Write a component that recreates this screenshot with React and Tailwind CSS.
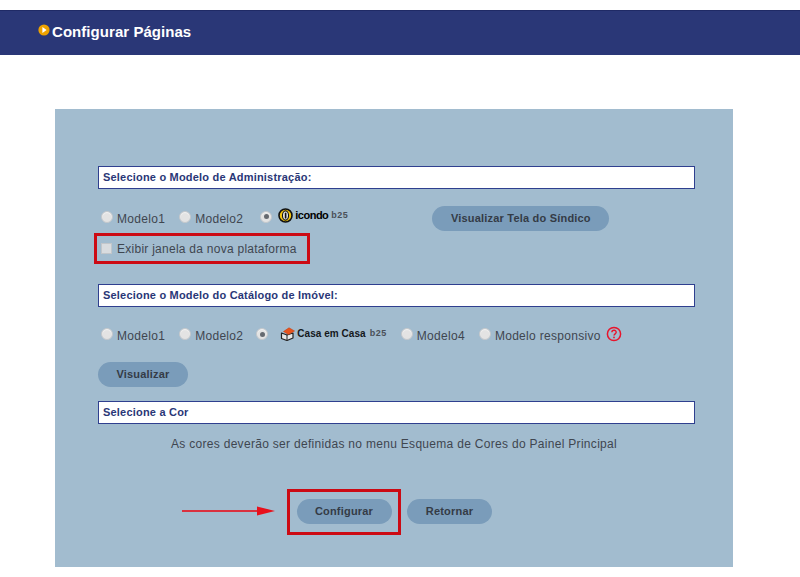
import React from 'react';

const FONT = 'font-["Liberation_Sans",Arial,sans-serif]';

function SectionBar({ title, className = '' }) {
  return (
    <div className={`flex h-[23px] w-[597px] items-center border border-[#2f3f8f] bg-white pb-[1px] pl-1 text-[11px] font-bold tracking-[0.2px] text-[#2a3777] ${className}`}>
      {title}
    </div>
  );
}

function Radio({ checked }) {
  return (
    <span className="mb-[4px] flex h-[12px] w-[12px] shrink-0 items-center justify-center rounded-full border border-[#c4c8cc] bg-[#e3e3e3] shadow-[inset_0_1px_1px_#f5f5f5]">
      {checked && <span className="h-[5px] w-[5px] rounded-full bg-[#666a70]" />}
    </span>
  );
}

function Option({ label, checked, className = '' }) {
  return (
    <label className={`flex items-center ${className}`}>
      <Radio checked={checked} />
      {label && <span className="ml-[4px] text-[12px] tracking-[0.3px] text-[#3f4650]">{label}</span>}
    </label>
  );
}

function PillButton({ children, className = '' }) {
  return (
    <button className={`flex h-[25px] items-center justify-center rounded-full bg-[#7a9cba] text-[11px] font-bold tracking-[0.2px] text-[#343b46] ${className}`}>
      {children}
    </button>
  );
}

function IcondoLogo() {
  return (
    <span className="flex items-center">
      <svg width="15" height="15" viewBox="0 0 15 15">
        <circle cx="7.5" cy="7.5" r="6.5" fill="#f2c40f" stroke="#111" strokeWidth="1.6" />
        <ellipse cx="7.5" cy="7.5" rx="3" ry="4.6" fill="#fff" stroke="#111" strokeWidth="1.2" />
        <rect x="6.7" y="4.6" width="1.8" height="6" fill="#111" />
      </svg>
      <span className="ml-[2px] text-[11px] font-bold tracking-[-0.5px] text-black">icondo</span>
      <span className="ml-[3px] text-[9px] font-bold tracking-[0.5px] text-[#4a5058]">b25</span>
    </span>
  );
}

function CasaLogo() {
  return (
    <span className="flex items-center">
      <svg width="15" height="14" viewBox="0 0 15 14">
        <path d="M1.5 6 L1.5 11.5 L7 13.5 L13 11 L13 6 L7 8 Z" fill="#e8e8e8" stroke="#222" strokeWidth="1.2" strokeLinejoin="round" />
        <path d="M3.5 4.5 L9 0.8 L14.5 4 L8.5 7.5 Z" fill="#e8541e" stroke="#c8400f" strokeWidth="0.6" />
        <path d="M7 8 L7 13" stroke="#222" strokeWidth="1" />
      </svg>
      <span className="ml-[2px] text-[10px] font-bold tracking-[0.05px] text-[#15181c]">Casa em Casa</span>
      <span className="ml-[4px] text-[9px] font-bold tracking-[0.5px] text-[#4a5058]">b25</span>
    </span>
  );
}

export default function App() {
  return (
    <div className={`min-h-[577px] overflow-hidden bg-white ${FONT}`}>
      {/* Title bar */}
      <div className="mt-[10px] flex h-[45px] items-center border-t border-[#1f2a66] bg-[#2a3777] pb-[2px] pl-[38px]">
        <svg width="12" height="12" viewBox="0 0 12 12" className="mb-[4px]">
          <circle cx="6" cy="6" r="5.6" fill="#eea200" />
          <path d="M4.4 3 L8.6 6 L4.4 9 Z" fill="#fff" />
        </svg>
        <h1 className="ml-[2px] text-[15px] font-bold tracking-[0.05px] text-white">Configurar Páginas</h1>
      </div>

      {/* Panel */}
      <div className="ml-[55px] mt-[54px] h-[458px] w-[678px] bg-[#a2bccf] pl-[43px] pt-[57px]">
        <SectionBar title="Selecione o Modelo de Administração:" />

        <div className="mt-[17px] flex h-[25px] items-center">
          <Option label="Modelo1" className="ml-[3px]" />
          <Option label="Modelo2" className="ml-[14px]" />
          <Option className="ml-[17px]" checked />
          <span className="mb-[6px] ml-[6px]"><IcondoLogo /></span>
          <PillButton className="ml-[84px] w-[177px]">Visualizar Tela do Síndico</PillButton>
        </div>

        <div className="-ml-[4px] mt-[2px] flex h-[31px] w-[216px] items-center border-[3px] border-[#cc0a14] pl-[4px]">
          <span className="mb-[1px] h-[11px] w-[11px] border border-[#c2c6ca] bg-[#d9dcdf]" />
          <span className="ml-[5px] mt-[1px] text-[12px] tracking-[0.26px] text-[#3f4650]">Exibir janela da nova plataforma</span>
        </div>

        <SectionBar title="Selecione o Modelo do Catálogo de Imóvel:" className="mt-[20px]" />

        <div className="mt-[18px] flex h-[22px] items-center">
          <Option label="Modelo1" className="ml-[3px]" />
          <Option label="Modelo2" className="ml-[14px]" />
          <Option className="ml-[13px]" checked />
          <span className="mb-[5px] ml-[12px]"><CasaLogo /></span>
          <Option label="Modelo4" className="ml-[14px]" />
          <Option label="Modelo responsivo" className="ml-[14px]" />
          <svg width="16" height="16" viewBox="0 0 16 16" className="mb-[5px] ml-[5px]">
            <circle cx="8" cy="8" r="6.6" fill="none" stroke="#e8142c" strokeWidth="1.5" />
            <path d="M5.9 6.3 C5.9 3.6 10.2 3.6 10.2 6.2 C10.2 7.8 8 7.9 8 9.6" fill="none" stroke="#e8142c" strokeWidth="1.4" />
            <circle cx="8" cy="11.4" r="0.9" fill="#e8142c" />
          </svg>
        </div>

        <PillButton className="mt-[15px] w-[90px]">Visualizar</PillButton>

        <SectionBar title="Selecione a Cor" className="mt-[14px]" />

        <p className="mt-[11px] w-[597px] pr-[5px] text-center text-[12px] tracking-[0.3px] text-[#3f4650]">
          As cores deverão ser definidas no menu Esquema de Cores do Painel Principal
        </p>

        <div className="ml-[84px] mt-[36px] flex items-center">
          <svg width="93" height="10" viewBox="0 0 93 10" className="mb-[3px] mr-[12px]">
            <rect x="0" y="4.2" width="76" height="1.6" fill="#e8101c" />
            <path d="M75 0.4 L93 5 L75 9.6 Z" fill="#e8101c" />
          </svg>
          <div className="flex h-[46px] w-[114px] items-center justify-center border-[3px] border-[#cc0a14] pb-[1px]">
            <PillButton className="w-[95px]">Configurar</PillButton>
          </div>
          <PillButton className="mb-[1px] ml-[6px] w-[85px]">Retornar</PillButton>
        </div>
      </div>
    </div>
  );
}
